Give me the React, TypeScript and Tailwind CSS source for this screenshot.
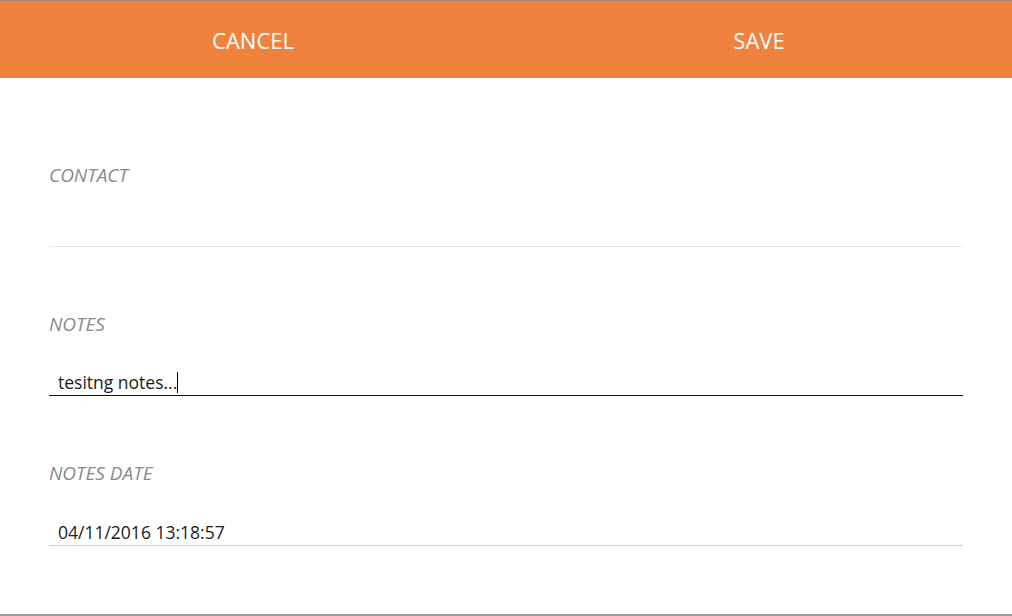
const font = { fontFamily: '"Open Sans", "Noto Sans", sans-serif' }

const Label = ({ children }: { children: string }) => (
  <div className="h-6 leading-6 text-[19px] italic text-[#8a8a8a]">{children}</div>
)

const App = () => {
  return (
    <div
      className="w-[1012px] h-[616px] flex flex-col bg-white border-t border-[#a08a78] border-b-2 border-b-[#9a9a9a] overflow-hidden"
      style={font}
    >
      {/* Header */}
      <div className="h-[77px] shrink-0 flex bg-[#ef833e] text-white text-[22px]">
        <button className="flex-1 flex items-center justify-center pt-[1px] cursor-pointer">CANCEL</button>
        <button className="flex-1 flex items-center justify-center pt-[1px] cursor-pointer">SAVE</button>
      </div>

      {/* Form */}
      <div className="flex-1 px-[49px] pt-[85px]">
        <div>
          <Label>CONTACT</Label>
          <div className="h-[60px] border-b border-[#e8e8e8]" />
        </div>

        <div className="mt-[65px]">
          <Label>NOTES</Label>
          <div className="h-[60px] border-b border-[#111] flex items-end pl-[9px] pb-[1px] text-[17.5px] text-[#1c1c1c]">
            <span className="leading-[24px]">tesitng notes...</span>
            <span className="inline-block w-px h-[21px] bg-black mb-px" />
          </div>
        </div>

        <div className="mt-[65px]">
          <Label>NOTES DATE</Label>
          <div className="h-[61px] border-b border-[#cfcfcf] flex items-end pl-[9px] pb-[1px] text-[17.5px] text-[#1c1c1c]">
            <span className="leading-[24px]">04/11/2016 13:18:57</span>
          </div>
        </div>
      </div>
    </div>
  )
}

export default App
